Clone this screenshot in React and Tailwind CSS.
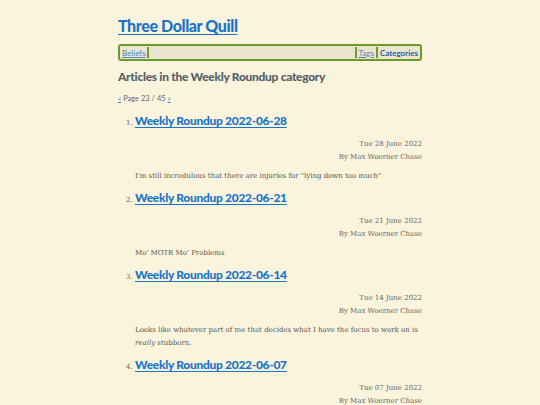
// Category listing page: site title, nav strip, paged article list.
const posts = [
  {
    title: "Weekly Roundup 2022-06-28",
    date: "Tue 28 June 2022",
    summary: <>I'm still incredulous that there are injuries for "lying down too much"</>,
  },
  {
    title: "Weekly Roundup 2022-06-21",
    date: "Tue 21 June 2022",
    summary: <>Mo' MOTR Mo' Problems</>,
  },
  {
    title: "Weekly Roundup 2022-06-14",
    date: "Tue 14 June 2022",
    summary: (
      <>
        Looks like whatever part of me that decides what I have the focus to work on is{" "}
        <em>really</em> stubborn.
      </>
    ),
  },
  {
    title: "Weekly Roundup 2022-06-07",
    date: "Tue 07 June 2022",
    summary: null,
  },
];

const heading = "font-['Lato','Open_Sans',sans-serif]";
const body = "font-['DejaVu_Serif','Liberation_Serif',serif]";

export default function App() {
  return (
    <div className={`min-h-screen bg-[#fbf4dc] ${body}`}>
      <div className="w-[304px] mx-auto pt-[15px]">
        <h1 className={`${heading} text-[16px] font-black tracking-[-0.4px] leading-[22px]`}>
          <a href="#" className="text-[#1a74c9] underline underline-offset-2">
            Three Dollar Quill
          </a>
        </h1>

        {/* nav strip */}
        <nav
          className={`${heading} mt-[7px] flex items-center h-[17px] border-[2px] border-[#6b9c2a] rounded-[3px] bg-[#ebe4cf] px-[2px] text-[8px]`}
        >
          <a href="#" className="text-[#4a86c4] underline">Beliefs</a>
          <span className="ml-[1px] w-[2px] h-[11px] bg-[#6b9c2a]" />
          <span className="flex-1" />
          <span className="w-[2px] h-[11px] bg-[#6b9c2a]" />
          <a href="#" className="ml-[2px] text-[#4a86c4] underline">Tags</a>
          <span className="ml-[2px] w-[2px] h-[11px] bg-[#6b9c2a]" />
          <a href="#" className="ml-[2px] font-bold text-[#1d5fa3]">Categories</a>
        </nav>

        <h2 className={`${heading} mt-[8px] text-[12px] font-black tracking-[-0.3px] text-[#56606a] leading-[16px]`}>
          Articles in the Weekly Roundup category
        </h2>

        <p className={`${heading} mt-[9px] text-[7.5px] text-[#666] leading-[10px]`}>
          <a href="#" className="text-[#4a86c4] underline">«</a> Page 23 / 45{" "}
          <a href="#" className="text-[#4a86c4] underline">»</a>
        </p>

        <ol className="mt-[4px] pl-[17px] list-decimal marker:text-[7px] marker:text-[#666]">
          {posts.map((p) => (
            <li key={p.title} className="pb-[2px]">
              <a
                href="#"
                className={`${heading} text-[12px] font-black tracking-[-0.3px] leading-[18px] text-[#1a74c9] underline underline-offset-2`}
              >
                {p.title}
              </a>
              <div className="mt-[6px] text-right text-[7px] leading-[13px] text-[#666]">
                <div>{p.date}</div>
                <div>By Max Woerner Chase</div>
              </div>
              {p.summary && (
                <p className="mt-[6px] text-[7px] leading-[13px] text-[#555]">{p.summary}</p>
              )}
            </li>
          ))}
        </ol>
      </div>
    </div>
  );
}
